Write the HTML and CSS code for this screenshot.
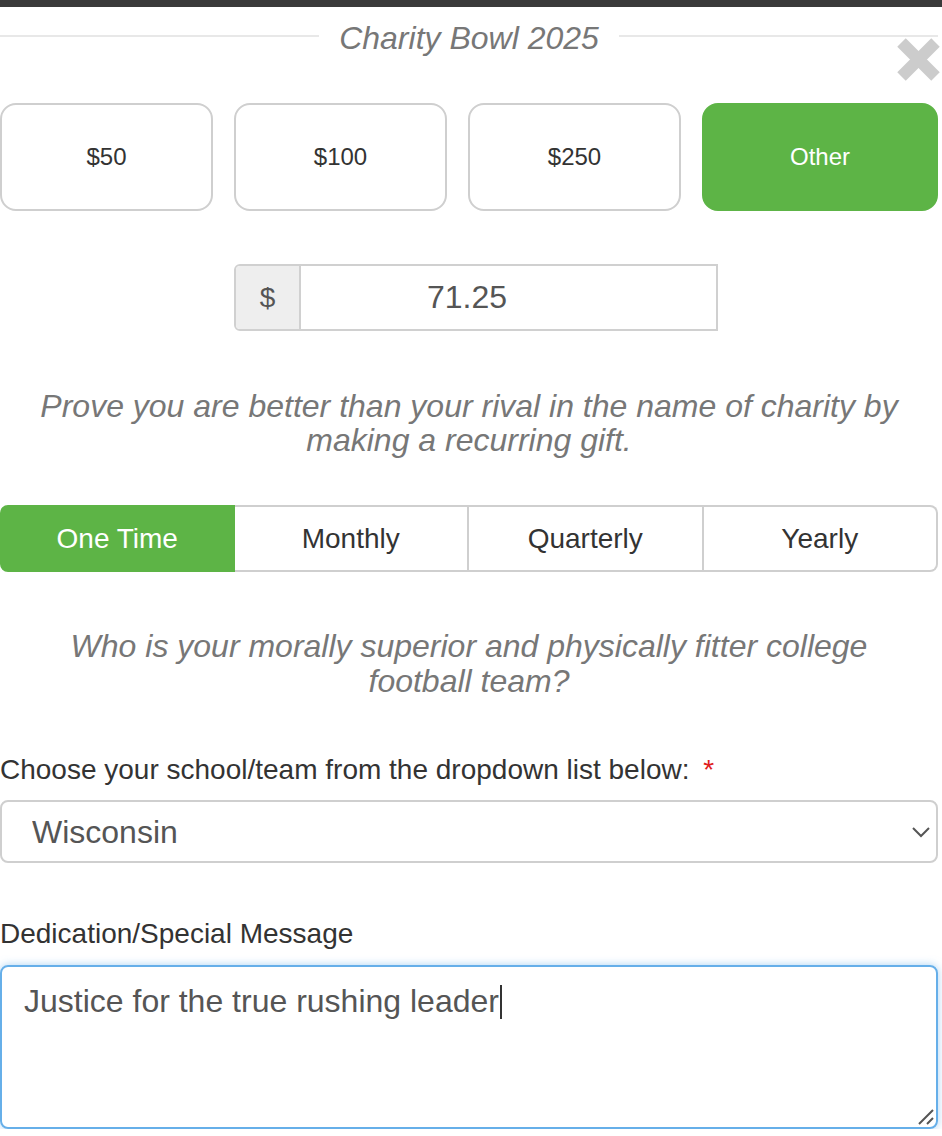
FILE: index.html
```html
<!DOCTYPE html>
<html lang="en">
<head>
<meta charset="utf-8">
<title>Charity Bowl 2025</title>
<link rel="stylesheet" href="styles.css">
</head>
<body>
<div class="top-bar"></div>
<div class="modal">
  <div class="legend">
    <span class="legend-line"></span>
    <h2 class="legend-title">Charity Bowl 2025</h2>
    <span class="legend-line"></span>
  </div>
  <button class="close" aria-label="Close">
    <svg width="43" height="43" viewBox="0 0 43 43"><path d="M4.5 4.5 L38.5 38.5 M38.5 4.5 L4.5 38.5" stroke="#cccccc" stroke-width="12" stroke-linecap="butt" fill="none"/></svg>
  </button>

  <div class="amounts">
    <button class="amount">$50</button>
    <button class="amount">$100</button>
    <button class="amount">$250</button>
    <button class="amount active">Other</button>
  </div>

  <div class="amount-input">
    <span class="addon">$</span>
    <span class="amount-value">71.25</span>
  </div>

  <p class="prompt prompt-first">Prove you are better than your rival in the name of charity by making a recurring gift.</p>

  <div class="freq">
    <button class="freq-btn active">One Time</button>
    <button class="freq-btn">Monthly</button>
    <button class="freq-btn">Quarterly</button>
    <button class="freq-btn">Yearly</button>
  </div>

  <p class="prompt prompt-second">Who is your morally superior and physically fitter college football team?</p>

  <label class="field-label label-team">Choose your school/team from the dropdown list below: <span class="req">*</span></label>
  <div class="select-wrap">
    <select class="team-select"><option>Wisconsin</option></select>
    <svg class="chevron" width="20" height="12" viewBox="0 0 20 12"><path d="M2 2 L10 10 L18 2" fill="none" stroke="#555" stroke-width="2"/></svg>
  </div>

  <label class="field-label label-message">Dedication/Special Message</label>
  <div class="message">Justice for the true rushing leader<span class="caret"></span>
    <svg class="grip" width="16" height="16" viewBox="0 0 16 16"><path d="M1 15 L15 1 M9 15 L15 9" stroke="#555" stroke-width="2" fill="none"/></svg>
  </div>
</div>
</body>
</html>
```
FILE: styles.css
```css
* { box-sizing: border-box; }

body {
  margin: 0;
  font-family: "Liberation Sans", Arial, sans-serif;
  background: #fff;
  color: #333;
}

.top-bar {
  height: 7px;
  background: #3a3a3a;
}

.modal {
  position: relative;
  width: 938px;
  padding-top: 13px;
}

.legend {
  display: flex;
  align-items: flex-start;
}

.legend-line {
  flex: 1;
  height: 2px;
  margin-top: 15px;
  background: #e8e8e8;
}

.legend-title {
  margin: 0;
  padding: 0 20px;
  font-size: 32px;
  line-height: 36px;
  font-style: italic;
  font-weight: normal;
  color: #777;
}

.close {
  position: absolute;
  top: 31px;
  right: -2px;
  width: 43px;
  height: 43px;
  padding: 0;
  border: 0;
  background: none;
}

.close svg { display: block; }

.amounts {
  display: grid;
  grid-template-columns: repeat(3, 213px) 1fr;
  column-gap: 21px;
  margin-top: 47px;
}

.amount {
  height: 108px;
  border: 2px solid #cfcfcf;
  border-radius: 16px;
  background: #fff;
  font: 24px "Liberation Sans", Arial, sans-serif;
  color: #333;
}

.amount.active {
  background: #5db446;
  border-color: #5db446;
  color: #fff;
}

.amount-input {
  display: flex;
  width: 484px;
  height: 67px;
  margin: 53px 0 0 234px;
  border: 2px solid #d0d0d0;
  border-radius: 6px 0 0 6px;
}

.addon {
  width: 65px;
  display: flex;
  align-items: center;
  justify-content: center;
  background: #eee;
  border-right: 2px solid #d0d0d0;
  border-radius: 4px 0 0 4px;
  font-size: 28px;
  color: #555;
}

.amount-value {
  flex: 1;
  display: flex;
  align-items: center;
  padding-left: 126px;
  font-size: 32px;
  color: #555;
}

.prompt {
  margin: 0;
  padding: 0 35px;
  text-align: center;
  font-size: 32px;
  font-style: italic;
  color: #777;
}

.prompt-first {
  margin-top: 58px;
  line-height: 34px;
}

.prompt-second {
  margin-top: 57px;
  line-height: 35px;
}

.freq {
  display: grid;
  grid-template-columns: repeat(4, 1fr);
  height: 67px;
  margin-top: 48px;
}

.freq-btn {
  border: 2px solid #cfcfcf;
  border-left: 0;
  background: #fff;
  font: 28px "Liberation Sans", Arial, sans-serif;
  color: #333;
}

.freq-btn:first-child {
  border-left: 2px solid #cfcfcf;
  border-radius: 8px 0 0 8px;
}

.freq-btn:last-child {
  border-radius: 0 8px 8px 0;
}

.freq-btn.active {
  background: #5db446;
  border-color: #5db446;
  color: #fff;
}

.field-label {
  display: block;
  font-size: 28px;
  line-height: 32px;
  color: #333;
}

.label-team { margin-top: 55px; }
.label-message { margin-top: 55px; }

.req {
  color: #e0201c;
  margin-left: 6px;
}

.select-wrap {
  position: relative;
  margin-top: 14px;
}

.team-select {
  display: block;
  width: 100%;
  height: 63px;
  padding: 0 0 0 30px;
  border: 2px solid #cfcfcf;
  border-radius: 8px;
  background: #fff;
  font: 32px "Liberation Sans", Arial, sans-serif;
  color: #555;
  appearance: none;
  -webkit-appearance: none;
}

.chevron {
  position: absolute;
  right: 7px;
  top: 26px;
}

.message {
  position: relative;
  height: 164px;
  margin-top: 15px;
  padding: 16px 22px;
  border: 2px solid #66afe9;
  border-radius: 8px;
  box-shadow: 0 0 8px rgba(102, 175, 233, 0.55);
  font-size: 32px;
  line-height: 36px;
  color: #555;
}

.caret {
  display: inline-block;
  width: 2px;
  height: 34px;
  margin-left: 1px;
  vertical-align: -7px;
  background: #333;
}

.grip {
  position: absolute;
  right: 2px;
  bottom: 2px;
}
```
